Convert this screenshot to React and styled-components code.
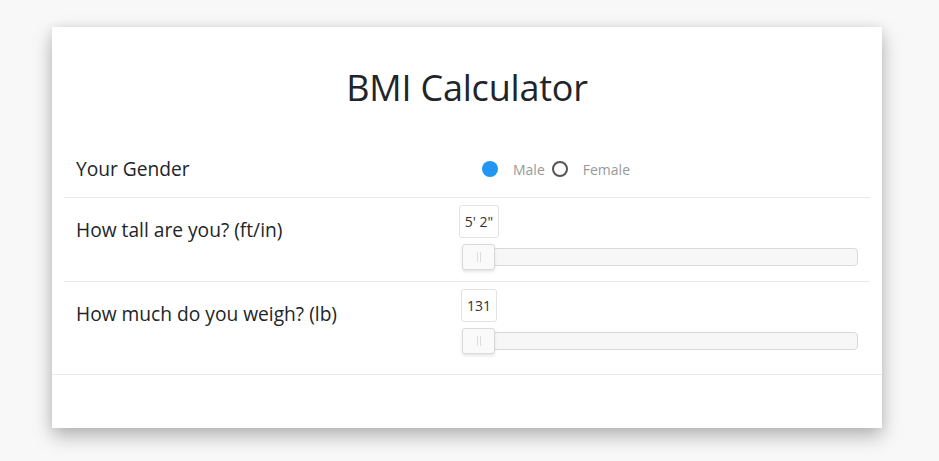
import React, { useState } from "react";
import styled, { createGlobalStyle } from "styled-components";

const GlobalStyle = createGlobalStyle`
  html, body {
    margin: 0;
    padding: 0;
    background: #f8f8f8;
    font-family: "Open Sans", "Noto Sans", sans-serif;
    color: #212529;
  }
`;

const Page = styled.div`
  padding: 27px 0 0 52px;
  height: 461px;
  box-sizing: border-box;
`;

const Card = styled.div`
  width: 830px;
  height: 401px;
  background: #fff;
  box-shadow: 0 8px 18px rgba(0, 0, 0, 0.28), 0 0 10px rgba(0, 0, 0, 0.06);
  display: flex;
  flex-direction: column;
`;

const Title = styled.h1`
  margin: 0;
  padding: 39px 0 35px;
  font-size: 36px;
  line-height: 44px;
  font-weight: 400;
  text-align: center;
  letter-spacing: -0.2px;
`;

const Rows = styled.div`
  padding: 0 12px;
`;

const Row = styled.div`
  display: grid;
  grid-template-columns: 395px 1fr;
  border-bottom: ${(p) => (p.$last ? "none" : "1px solid #e9e9e9")};
  height: ${(p) => p.$h}px;
  padding-bottom: ${(p) => p.$pb || 0}px;
  box-sizing: border-box;
  align-items: ${(p) => (p.$center ? "center" : "start")};
`;

const Label = styled.div`
  padding-left: 12px;
  font-size: 19.2px;
  line-height: 26px;
  padding-top: ${(p) => p.$top || 0}px;
  white-space: nowrap;
`;

const RadioGroup = styled.div`
  display: flex;
  align-items: center;
  margin-left: 23px;
  font-size: 14px;
  color: #999;
`;

const Dot = styled.span`
  width: 16px;
  height: 16px;
  border-radius: 50%;
  box-sizing: border-box;
  background: ${(p) => (p.$on ? "#2196f3" : "transparent")};
  border: ${(p) => (p.$on ? "none" : "2px solid #555")};
  margin-right: 15px;
  cursor: pointer;
`;

const RadioText = styled.span`
  margin-right: 7px;
`;

const SliderCol = styled.div`
  padding: 7px 12px 0 3px;
`;

const ValueWrap = styled.div`
  width: 40px;
  margin-left: ${(p) => p.$offset}px;
  display: flex;
  justify-content: center;
`;

const ValueBox = styled.div`
  height: 33px;
  box-sizing: border-box;
  padding: 0 5px;
  border: 1px solid #e3e3e3;
  border-radius: 3px;
  font-size: 14px;
  line-height: 31px;
  color: #333;
  background: #fff;
  white-space: nowrap;
  flex-shrink: 0;
`;

const Track = styled.div`
  position: relative;
  margin-top: 10px;
  height: 18px;
  box-sizing: border-box;
  background: #f7f7f7;
  border: 1px solid #d9d9d9;
  border-radius: 4px;
`;

const Thumb = styled.div`
  position: absolute;
  left: -1px;
  top: -5px;
  width: 33px;
  height: 26px;
  box-sizing: border-box;
  background: #fafafa;
  border: 1px solid #d9d9d9;
  border-radius: 3px;
  box-shadow: 0 2px 3px rgba(0, 0, 0, 0.1);
  display: flex;
  justify-content: center;
  align-items: center;
  gap: 2px;
`;

const Grip = styled.span`
  width: 1px;
  height: 10px;
  background: #ddd;
`;

const Footer = styled.div`
  border-top: 1px solid #e9e9e9;
  flex: 1;
`;

const Slider = ({ value, offset }) => (
  <SliderCol>
    <ValueWrap $offset={offset}>
      <ValueBox>{value}</ValueBox>
    </ValueWrap>
    <Track>
      <Thumb>
        <Grip />
        <Grip />
      </Thumb>
    </Track>
  </SliderCol>
);

export default function App() {
  const [gender, setGender] = useState("male");
  return (
    <Page>
      <GlobalStyle />
      <Card>
        <Title>BMI Calculator</Title>
        <Rows>
          <Row $h={53} $pb={4} $center>
            <Label>Your Gender</Label>
            <RadioGroup>
              <Dot $on={gender === "male"} onClick={() => setGender("male")} />
              <RadioText>Male</RadioText>
              <Dot $on={gender === "female"} onClick={() => setGender("female")} />
              <RadioText>Female</RadioText>
            </RadioGroup>
          </Row>
          <Row $h={84}>
            <Label $top={19}>How tall are you? (ft/in)</Label>
            <Slider value={`5' 2"`} offset={-3} />
          </Row>
          <Row $h={92} $last>
            <Label $top={19}>How much do you weigh? (lb)</Label>
            <Slider value="131" offset={-3} />
          </Row>
        </Rows>
        <Footer />
      </Card>
    </Page>
  );
}
